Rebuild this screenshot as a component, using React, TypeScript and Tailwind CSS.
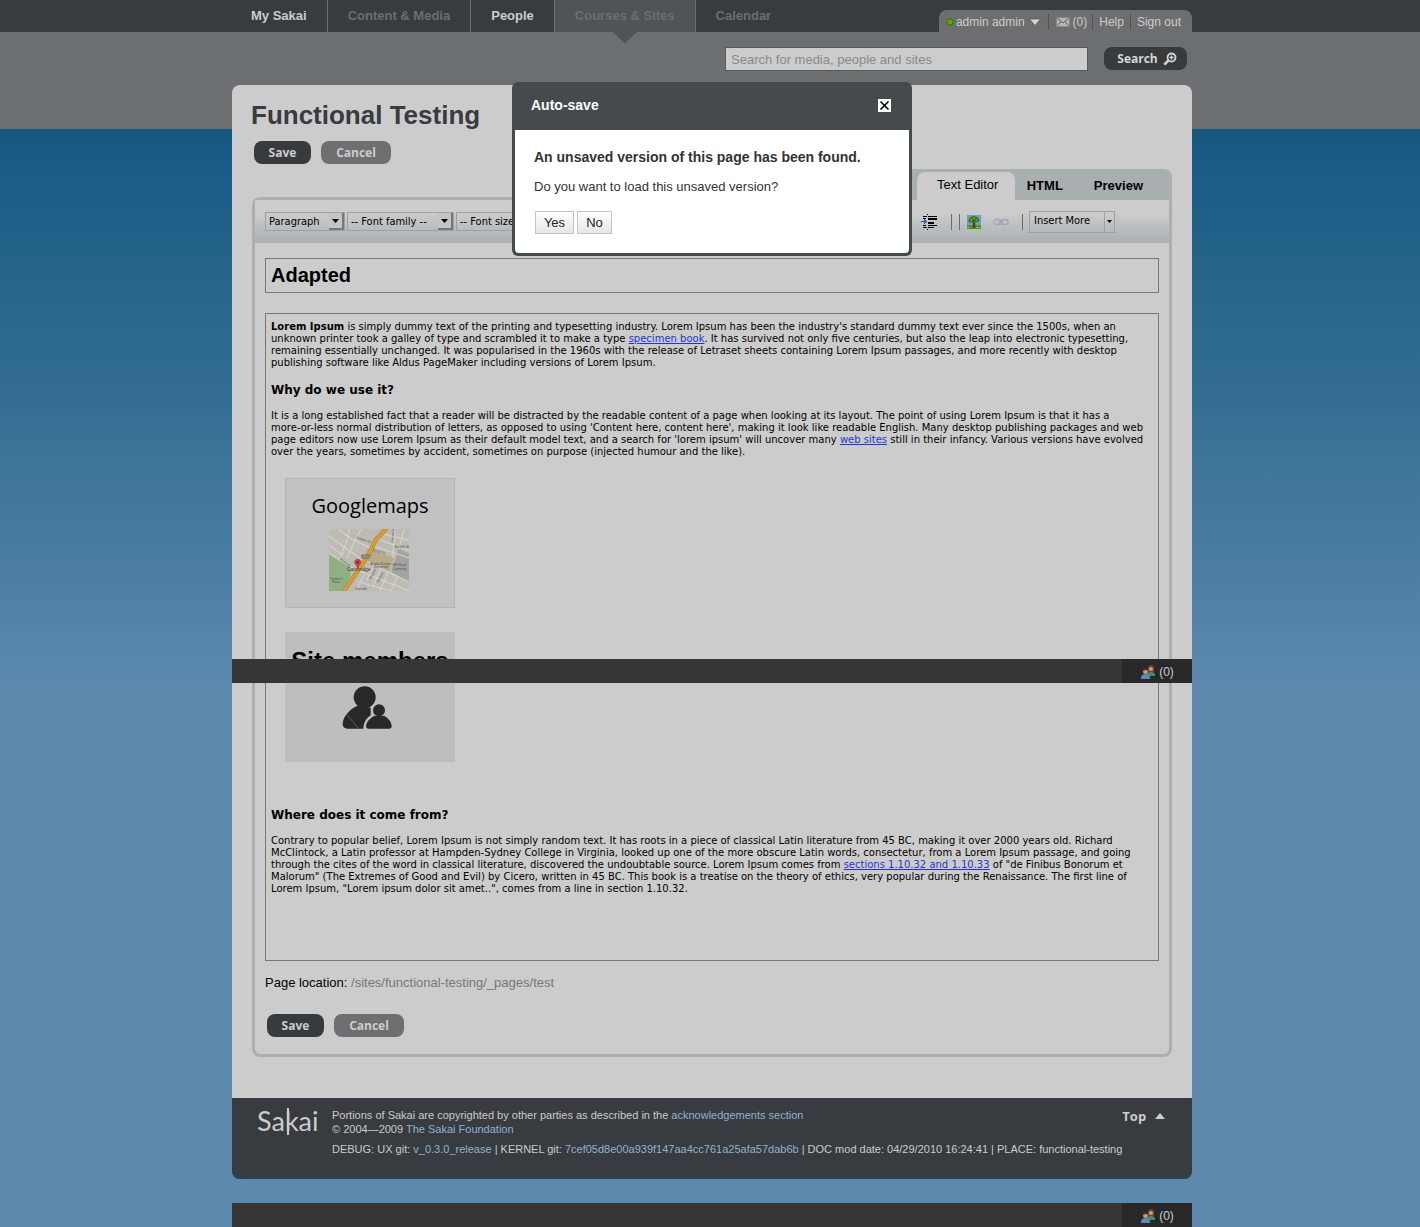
import React from "react";

const ARIAL = "font-['Liberation_Sans',Arial,sans-serif]";
const HUMANIST = "font-['Open_Sans','Noto_Sans',sans-serif]";
const TAHOMA = "font-['DejaVu_Sans_Condensed','DejaVu_Sans',sans-serif]";
const VERDANA = "font-['DejaVu_Sans',Verdana,sans-serif]";

const navItems = [
  { label: "My Sakai", style: "text-[#cccccc] pl-[19px]" },
  { label: "Content & Media", style: "text-[#6b6e70] border-l border-[#6b6f71] pl-5" },
  { label: "People", style: "text-[#cccccc] border-l border-[#6b6f71] pl-5" },
  { label: "Courses & Sites", style: "text-[#6b6e70] border-x border-[#6b6f71] bg-[#505357] pl-5", current: true },
  { label: "Calendar", style: "text-[#6b6e70] pl-5" },
];

function TopNav() {
  return (
    <div className="bg-[#383b40] pl-1">
      <div className="mx-auto flex h-8 w-full max-w-[960px] justify-between">
        <nav className="flex text-[13px] font-bold leading-8">
          {navItems.map((item) => (
            <a key={item.label} href="#" className={`relative h-8 whitespace-nowrap pr-5 ${item.style}`}>
              {item.label}
              {item.current && (
                <svg className="absolute left-1/2 top-8 -ml-3" width="24" height="12" viewBox="0 0 24 12" aria-hidden="true">
                  <path d="M0 0h24L12 11.5z" fill="#505357" />
                </svg>
              )}
            </a>
          ))}
        </nav>
        <div className="mt-[10px] flex h-[34px] items-start rounded-t-lg bg-[#6d6e6f] pl-[7px] pt-1 text-[12px] leading-4 text-[#cccccc]">
          <button type="button" className="flex items-center whitespace-nowrap pr-[7px]">
            <svg width="8" height="8" viewBox="0 0 8 8" className="mr-[2px]" aria-hidden="true">
              <circle cx="4" cy="4" r="3.2" fill="#62a600" stroke="#3c6a00" />
            </svg>
            admin admin
            <svg width="12" height="8" viewBox="0 0 12 8" className="ml-1" aria-hidden="true">
              <path d="M0.500 1h11L6 7.500z" fill="#d6d6d6" stroke="#444" strokeWidth="0.6" />
            </svg>
          </button>
          <a href="#" className="flex items-center whitespace-nowrap border-l border-[#505357] pl-[7px] pr-[5px]">
            <svg width="14" height="10" viewBox="0 0 14 10" className="mr-[3px]" aria-hidden="true">
              <rect x="0.5" y="0.5" width="13" height="9" fill="#b4b4b4" stroke="#8b8b8b" />
              <path d="M1 1l6 5 6-5M1 9l4-4.500M13 9L9 4.500" fill="none" stroke="#5f6062" strokeWidth="1" />
            </svg>
            (0)
          </a>
          <a href="#" className="border-l border-[#505357] px-[6px]">Help</a>
          <a href="#" className="whitespace-nowrap border-l border-[#505357] pl-[6px] pr-[11px]">Sign out</a>
        </div>
      </div>
    </div>
  );
}

function SearchRow() {
  return (
    <form className="mx-auto flex w-full max-w-[960px] justify-end gap-4 pr-[5px] pt-[15px]">
      <input
        aria-label="Search"
        placeholder="Search for media, people and sites"
        className="h-6 w-[363px] border border-[#57595b] bg-[#cccccc] px-[5px] text-[13px] text-[#333] placeholder:text-[#8a8a8a]"
      />
      <button type="button" className={`flex h-[23px] w-[83px] items-center justify-center gap-[5px] rounded-lg bg-[#383b3e] pl-[3px] text-[12px] font-bold text-[#d4d4d4] ${HUMANIST}`}>
        Search
        <svg width="14" height="14" viewBox="0 0 14 14" aria-hidden="true">
          <circle cx="8.500" cy="5.500" r="4" fill="none" stroke="#d4d4d4" strokeWidth="1.800" />
          <path d="M5.300 8.700L1.300 12.700" stroke="#d4d4d4" strokeWidth="2.600" />
          <path d="M8.500 3.500v4M6.500 5.500h4" stroke="#d4d4d4" strokeWidth="1.300" />
        </svg>
      </button>
    </form>
  );
}

function SaveCancel() {
  return (
    <div className={`flex gap-[10px] text-[12px] font-bold text-[#cccccc] ${HUMANIST}`}>
      <button type="button" className="h-[23px] w-[57px] rounded-lg bg-[#383b3e]">Save</button>
      <button type="button" className="h-[23px] w-[70px] rounded-lg bg-[#6e6f70]">Cancel</button>
    </div>
  );
}

function ToolSelect({ label, width }: { label: string; width: string }) {
  return (
    <div className={`relative h-[19px] shrink-0 border border-[#a0a0a0] ${width}`}>
      <select aria-label={label} className={`block h-full w-full appearance-none bg-transparent pl-[3px] text-[11px] leading-4 text-black ${TAHOMA}`}>
        <option>{label}</option>
      </select>
      <span className="pointer-events-none absolute right-0 top-0 flex h-[17px] w-[15px] items-center justify-center border-b-2 border-r-2 border-[#777] bg-[#c4c4c4]">
        <svg width="7" height="4" viewBox="0 0 7 4" aria-hidden="true">
          <path d="M0 0h7L3.500 4z" fill="#000" />
        </svg>
      </span>
    </div>
  );
}

function Toolbar() {
  return (
    <div className="flex h-[43px] items-center justify-between rounded-tr bg-linear-to-b from-[#cccccc] from-30% to-[#a9b0b3] pl-[10px] pr-[54px]">
      <div className="flex gap-[2px]">
        <ToolSelect label="Paragraph" width="w-[80px]" />
        <ToolSelect label="-- Font family --" width="w-[107px]" />
        <ToolSelect label="-- Font size --" width="w-[90px]" />
      </div>
      <div className="flex items-center">
        <button type="button" aria-label="Indent">
          <svg width="17" height="16" viewBox="0 0 17 16" shapeRendering="crispEdges" aria-hidden="true">
            <path d="M2 2.500h4M7 2.500h9M7 11.500h9M2 13.500h4M7 13.500h6M2 4.500h3M2 11.500h3" stroke="#000" />
            <path d="M7 5h9M7 8.500h6" stroke="#000" strokeWidth="2" />
            <path d="M6.500 0v1M6.500 15v1" stroke="#000" />
            <path d="M0 7h3V4.500L6 7.500 3 10V8H0z" fill="#3457a8" />
          </svg>
        </button>
        <span className="ml-[13px] h-4 w-px bg-[#6f6a70]" />
        <span className="ml-[7px] h-4 w-px bg-[#6f6a70]" />
        <button type="button" aria-label="Insert image" className="ml-[7px]">
          <svg width="14" height="14" viewBox="0 0 14 14" aria-hidden="true">
            <rect width="14" height="14" fill="#6f9bc9" />
            <rect y="10.500" width="14" height="3.500" fill="#4e8d12" />
            <path d="M6 7h2l.5 5.500h-3z" fill="#5b3a12" />
            <path d="M4 2l2-1 3 .5 2 1.500 1.500 2-1.500 2H9L7.500 8 6 7.500 3 8 1.500 6.500 2 4z" fill="#2f7a10" />
            <path d="M3.500 4h2v1h-2zM6 2.500h2v1H6zM8.500 4.500h2v1h-2zM3 6.500h2v1H3zM0 12h3v1H0zM9 12h4v1H9z" fill="#8cc63a" />
          </svg>
        </button>
        <button type="button" aria-label="Insert link" className="ml-3">
          <svg width="16" height="8" viewBox="0 0 16 8" fill="none" stroke="#a3a8b2" strokeWidth="1.400" aria-hidden="true">
            <rect x="1" y="1.500" width="7" height="5" rx="2.500" />
            <rect x="8" y="1.500" width="7" height="5" rx="2.500" />
            <path d="M5 4h6" />
          </svg>
        </button>
        <span className="ml-[13px] mr-[6px] h-4 w-px bg-[#6f6a70]" />
        <div className="relative h-[22px] w-[86px] border border-[#a0a0a0]">
          <select aria-label="Insert More" className={`block h-full w-full appearance-none bg-transparent pl-1 text-[11px] text-black ${TAHOMA}`}>
            <option>Insert More</option>
          </select>
          <span className="pointer-events-none absolute right-0 top-0 flex h-5 w-[10px] items-center justify-center border-l border-[#a0a0a0]">
            <svg width="5" height="3" viewBox="0 0 5 3" aria-hidden="true">
              <path d="M0 0h5L2.500 3z" fill="#000" />
            </svg>
          </span>
        </div>
      </div>
    </div>
  );
}

function MapPicture() {
  return (
    <svg width="80" height="62" viewBox="0 0 237 183" role="img" aria-label="Map of Cambridge">
      <rect width="237" height="183" fill="#bdbbb3" />
      <path d="M0 72l66 42-4 28-22 41H0z" fill="#8fb083" />
      <path d="M112 58l80 26-14 44-76-32z" fill="#b8ab8c" />
      <path d="M206 58l31 14v84l-52-28z" fill="#a3a3a1" />
      <g fill="none" stroke="#d6d5d0" strokeWidth="3">
        <path d="M0 20l60 44 50 34M0 48l40 28M28 0l40 30 58 28M60 0l-8 38-20 50M96 0l-20 36-24 52M0 72l70 44 100 40 67 27M106 92l80 40 51 24M126 48l111 38M140 28l97 36M160 14l77 20M196 0l-8 84M222 0l-14 60M134 106l-22 46M154 116l-24 56M176 126l-26 57M204 138l-20 45M100 140l-20 43M84 156l100 27" />
      </g>
      <path d="M172 -4l-34 36-18 40-34 50-44 66" fill="none" stroke="#a98436" strokeWidth="13" />
      <path d="M172 -4l-34 36-18 40-34 50-44 66" fill="none" stroke="#d59d36" strokeWidth="10" />
      <rect x="96" y="76" width="25" height="11" rx="2" fill="#8f8f78" stroke="#555" />
      <g className={ARIAL} fill="#55545a" fontSize="10">
        <text x="54" y="125" fontSize="14" fill="#333">Cambridge</text>
        <text x="122" y="106">Anglia Ruskin</text>
        <text x="132" y="116">University</text>
        <text x="188" y="110">Mill Road</text>
        <text x="188" y="121">Cemetery</text>
        <text x="4" y="150">Parker's</text>
        <text x="8" y="160">Piece</text>
        <text x="194" y="55">Norfolk St</text>
        <text x="80" y="28" transform="rotate(18 80 28)">Grafton St</text>
        <text x="128" y="64" transform="rotate(17 128 64)">Street St</text>
        <text x="30" y="90" transform="rotate(36 30 90)">Parkside</text>
        <text x="124" y="150" transform="rotate(-62 124 150)">Glisson</text>
        <text x="146" y="160" transform="rotate(-62 146 160)">Tenison</text>
        <text x="190" y="40" transform="rotate(-84 190 40)">Ainsworth</text>
        <text x="76" y="181">Gonville</text>
      </g>
      <path d="M85 116c-2-10-9-10-9-18a9 9 0 0118 0c0 8-7 8-9 18z" fill="#d0443c" stroke="#7c1d18" />
      <circle cx="85" cy="98" r="3" fill="#5c1512" />
    </svg>
  );
}

function MembersPicture() {
  return (
    <svg width="50" height="44" viewBox="0 0 150 132" role="img" aria-label="Members">
      <circle cx="68" cy="37" r="33" fill="#282828" />
      <path d="M50 60C24 72 2 94 2 118c0 8 6 13 14 13h70V68z" fill="#282828" />
      <circle cx="111" cy="76" r="24" fill="#bebebe" />
      <path d="M64 132c0-24 14-42 40-48l20 48z" fill="#bebebe" />
      <circle cx="111" cy="76" r="18" fill="#282828" />
      <path d="M99 92h26c14 6 24 20 24 32 0 5-3 7-8 7H80c-5 0-8-2-8-7 0-12 12-26 27-32z" fill="#282828" />
      <path d="M14 88l36 43" stroke="#777" strokeWidth="2" />
    </svg>
  );
}

function EditorBody() {
  const heading = "text-[12px] font-bold leading-4";
  const link = "text-[#1f36cc] underline";
  return (
    <div className={`mt-5 h-[648px] whitespace-nowrap border border-[#777] px-[5px] pt-[7px] text-[10px] leading-[12px] text-black ${VERDANA}`}>
      <p>
        <b>Lorem Ipsum</b> is simply dummy text of the printing and typesetting industry. Lorem Ipsum has been the industry's standard dummy text ever since the 1500s, when an<br />
        unknown printer took a galley of type and scrambled it to make a type <a href="#" className={link}>specimen book</a>. It has survived not only five centuries, but also the leap into electronic typesetting,<br />
        remaining essentially unchanged. It was popularised in the 1960s with the release of Letraset sheets containing Lorem Ipsum passages, and more recently with desktop<br />
        publishing software like Aldus PageMaker including versions of Lorem Ipsum.
      </p>
      <h3 className={`mt-[13px] ${heading}`}>Why do we use it?</h3>
      <p className="mt-3">
        It is a long established fact that a reader will be distracted by the readable content of a page when looking at its layout. The point of using Lorem Ipsum is that it has a<br />
        more-or-less normal distribution of letters, as opposed to using 'Content here, content here', making it look like readable English. Many desktop publishing packages and web<br />
        page editors now use Lorem Ipsum as their default model text, and a search for 'lorem ipsum' will uncover many <a href="#" className={link}>web sites</a> still in their infancy. Various versions have evolved<br />
        over the years, sometimes by accident, sometimes on purpose (injected humour and the like).
      </p>
      <div className="ml-[14px] mt-5 flex h-[130px] w-[170px] flex-col items-center border border-[#b4b4b4] bg-[#c1c1c1] pt-[13px]">
        <div className={`text-[20px] leading-7 ${HUMANIST}`}>Googlemaps</div>
        <div className="mr-[2px] mt-[9px]"><MapPicture /></div>
      </div>
      <div className="ml-[14px] mt-6 flex h-[130px] w-[170px] flex-col items-center bg-[#bebebe] pt-[15px]">
        <div className={`text-[24px] font-bold leading-7 ${ARIAL}`}>Site members</div>
        <div className="mr-[7px] mt-[10px]"><MembersPicture /></div>
      </div>
      <h3 className={`mt-[45px] ${heading}`}>Where does it come from?</h3>
      <p className="mt-3">
        Contrary to popular belief, Lorem Ipsum is not simply random text. It has roots in a piece of classical Latin literature from 45 BC, making it over 2000 years old. Richard<br />
        McClintock, a Latin professor at Hampden-Sydney College in Virginia, looked up one of the more obscure Latin words, consectetur, from a Lorem Ipsum passage, and going<br />
        through the cites of the word in classical literature, discovered the undoubtable source. Lorem Ipsum comes from <a href="#" className={link}>sections 1.10.32 and 1.10.33</a> of "de Finibus Bonorum et<br />
        Malorum" (The Extremes of Good and Evil) by Cicero, written in 45 BC. This book is a treatise on the theory of ethics, very popular during the Renaissance. The first line of<br />
        Lorem Ipsum, "Lorem ipsum dolor sit amet..", comes from a line in section 1.10.32.
      </p>
    </div>
  );
}

function Editor() {
  return (
    <div className="mx-5 mt-[5px]">
      <div className="flex h-7 justify-end">
        <div role="tablist" className="flex h-[31px] items-end rounded-tr-lg rounded-tl-lg bg-[#a9aeb1] pl-7 text-[13px] font-bold text-black">
          <button type="button" role="tab" aria-selected="true" className="h-7 w-[98px] rounded-t-lg bg-[#cccccc] pb-[3px] pl-1 font-normal">Text Editor</button>
          <button type="button" role="tab" aria-selected="false" className="h-7 px-3">HTML</button>
          <button type="button" role="tab" aria-selected="false" className="h-7 pl-[19px] pr-[29px]">Preview</button>
        </div>
      </div>
      <div className="rounded-b-lg rounded-tl-lg border-[3px] border-[#a9b0b3] pb-[17px]">
        <Toolbar />
        <div className="px-[10px] pt-[15px]">
          <input
            aria-label="Page title"
            defaultValue="Adapted"
            className="block h-[35px] w-full border border-[#777] bg-transparent px-[5px] text-[20px] font-bold text-black"
          />
          <EditorBody />
          <p className="mt-[14px] text-[13px] leading-4 text-[#777]">
            <span className="text-black">Page location:</span> /sites/functional-testing/_pages/test
          </p>
          <div className="ml-[2px] mt-[23px]"><SaveCancel /></div>
        </div>
      </div>
    </div>
  );
}

function ChatBar({ placement }: { placement: string }) {
  return (
    <div className={`flex h-6 justify-end bg-[#363636] ${placement}`}>
      <button type="button" className="flex w-[70px] items-center justify-center gap-1 bg-[#282828] pl-px pt-[2px] text-[12px] text-[#cccccc]">
        <svg width="14" height="14" viewBox="0 0 14 14" aria-hidden="true">
          <path d="M7 7V3q0-3 3-3t3 3v4z" fill="#6e4526" />
          <circle cx="10" cy="4" r="2" fill="#c79a78" />
          <path d="M6 10q0-3 4-3t4 3v1H6z" fill="#4d8a6c" />
          <circle cx="4.500" cy="6.500" r="2.500" fill="#c79a78" />
          <path d="M2 6q0-3 2.500-3T7 6L4.500 5z" fill="#4a3526" />
          <path d="M0 14v-2q1-3 4.500-3T9 12v2z" fill="#5d8ab4" />
        </svg>
        (0)
      </button>
    </div>
  );
}

function Footer() {
  const link = "text-[#8fb3ce]";
  return (
    <footer className="flex h-[81px] items-start justify-between rounded-b-lg bg-[#383b40] pl-[25px] pr-[26px] pt-[10px] text-[11px] text-[#cccccc] shadow-[inset_0_-2px_1px_#2c4456]">
      <div className="flex">
        <div className="relative w-[75px] font-['Lato',sans-serif] text-[27px] leading-[26px]">
          Sakai
          <span className="absolute left-[30px] top-0 h-[27px] w-[2px] bg-[#cccccc]" />
        </div>
        <div className="whitespace-nowrap leading-[14px]">
          <p>Portions of Sakai are copyrighted by other parties as described in the <a href="#" className={link}>acknowledgements section</a></p>
          <p>© 2004—2009 <a href="#" className={link}>The Sakai Foundation</a></p>
          <p className="mt-[6px]">
            DEBUG: UX git: <a href="#" className={link}>v_0.3.0_release</a> | KERNEL git: <a href="#" className={link}>7cef05d8e00a939f147aa4cc761a25afa57dab6b</a> | DOC mod date: 04/29/2010 16:24:41 | PLACE: functional-testing
          </p>
        </div>
      </div>
      <a href="#" className={`flex items-center gap-2 text-[13px] font-bold leading-4 ${HUMANIST}`}>
        Top
        <svg width="12" height="8" viewBox="0 0 12 8" aria-hidden="true">
          <path d="M1 7h10L6 1z" fill="#cccccc" />
        </svg>
      </a>
    </footer>
  );
}

function AutoSaveDialog() {
  const button = "h-[23px] border border-[#c4c4c4] bg-linear-to-b from-white to-[#e6e6e6] text-[13px]";
  return (
    <div className="absolute inset-x-0 top-[82px] flex justify-center">
      <div role="dialog" aria-labelledby="autosave-title" className="w-[400px] rounded-md border-[3px] border-t-0 border-[#454a4e] bg-[#454a4e]">
        <div className="flex h-12 items-center justify-between pb-[2px] pl-4 pr-[18px]">
          <h2 id="autosave-title" className="text-[14px] font-bold leading-4 text-white">Auto-save</h2>
          <button type="button" aria-label="Close" className="bg-white">
            <svg width="13" height="13" viewBox="0 0 13 13" aria-hidden="true">
              <path d="M2.500 2.500l8 8M10.500 2.500l-8 8" stroke="#000" strokeWidth="1.600" />
            </svg>
          </button>
        </div>
        <div className="rounded-b-sm bg-white px-[19px] pb-[19px] pt-[18px] text-[#333]">
          <p className="whitespace-nowrap text-[14px] font-bold leading-[18px]">An unsaved version of this page has been found.</p>
          <p className="mt-[13px] text-[13px] leading-4">Do you want to load this unsaved version?</p>
          <div className="ml-px mt-4 flex gap-[3px] text-[#222]">
            <button type="button" className={`w-[39px] ${button}`}>Yes</button>
            <button type="button" className={`w-[35px] ${button}`}>No</button>
          </div>
        </div>
      </div>
    </div>
  );
}

export default function App() {
  return (
    <div className={`min-h-screen bg-[#5d89ac] ${ARIAL}`}>
      <header className="h-[129px] bg-[#6b6f71]">
        <TopNav />
        <div className="pl-1"><SearchRow /></div>
      </header>
      <div className="bg-[linear-gradient(to_bottom,#15567f_0,#1b5d85_44px,#2f6a90_230px,#5887ab_530px,#5d89ac_570px)] pl-1">
        <div className="mx-auto w-full max-w-[960px]">
          <main className="relative -mt-11 inline-block w-full rounded-t-lg bg-[#cccccc] pb-[41px] align-top">
            <h1 className="ml-[19px] mt-[14px] text-[26px] font-bold leading-8 text-[#383b40]">Functional Testing</h1>
            <div className="ml-[22px] mt-[10px]"><SaveCancel /></div>
            <Editor />
          </main>
          <Footer />
          <ChatBar placement="mt-6" />
        </div>
      </div>
      <div className="absolute inset-x-0 top-[659px] pl-1">
        <ChatBar placement="mx-auto w-full max-w-[960px]" />
      </div>
      <div className="absolute inset-x-0 top-0 pl-1">
        <div className="relative mx-auto w-full max-w-[960px]"><AutoSaveDialog /></div>
      </div>
    </div>
  );
}
